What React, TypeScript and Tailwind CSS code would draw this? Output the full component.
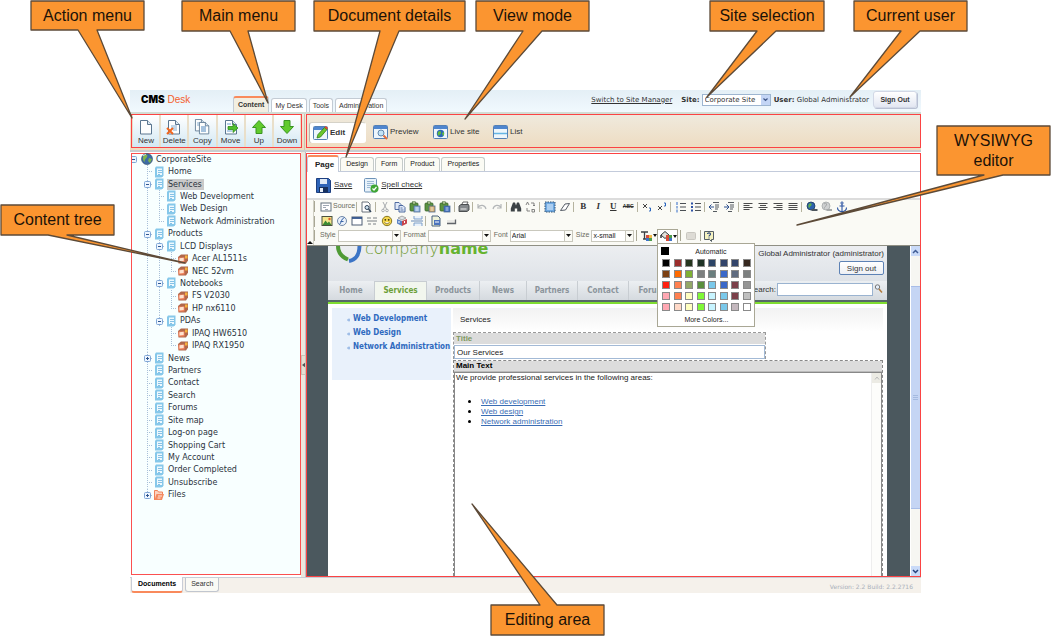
import React from "react";

const ARIAL = "font-['Liberation_Sans',Arial,sans-serif]";
const VERDANA = "font-['DejaVu_Sans',Verdana,sans-serif]";

/* ---------- Callouts ---------- */

type Callout = { text: string; box: string; shape: string };

const callouts: Callout[] = [
  { text: "Action menu", box: "left-[31px] top-[1px] w-[113px] h-[29px]", shape: "M31 1H144V30H97L132 118L78 30H31Z" },
  { text: "Main menu", box: "left-[182px] top-[1px] w-[113px] h-[30px]", shape: "M182 1H295V31H248L268 103L230 31H182Z" },
  { text: "Document details", box: "left-[314px] top-[1px] w-[151px] h-[30px]", shape: "M314 1H465V31H399L346 157L380 31H314Z" },
  { text: "View mode", box: "left-[476px] top-[1px] w-[113px] h-[30px]", shape: "M476 1H589V31H542L465 119L523 31H476Z" },
  { text: "Site selection", box: "left-[710px] top-[1px] w-[114px] h-[30px]", shape: "M710 1H824V31H776L707 97L757 31H710Z" },
  { text: "Current user", box: "left-[854px] top-[1px] w-[113px] h-[30px]", shape: "M854 1H967V31H920L850 97L901 31H854Z" },
  { text: "WYSIWYG editor", box: "left-[937px] top-[126px] w-[113px] h-[49px] px-3", shape: "M937 126H1050V175H1003L797 225L984 175H937Z" },
  { text: "Content tree", box: "left-[1px] top-[205px] w-[113px] h-[30px]", shape: "M1 205H114V235H67L185 263L48 235H1Z" },
  { text: "Editing area", box: "left-[491px] top-[605px] w-[113px] h-[30px]", shape: "M491 605H540L472 504L557 605H604V635H491Z" },
];

function Callouts() {
  return (
    <div className="pointer-events-none absolute left-0 top-0 z-30">
      <svg width="1051" height="636" className="block" aria-hidden="true">
        {callouts.map((c) => (
          <path key={c.text} d={c.shape} fill="#fb9530" stroke="#5c4a38" strokeWidth="1.3" strokeLinejoin="round" />
        ))}
      </svg>
      {callouts.map((c) => (
        <div key={c.text} className={`absolute flex items-center justify-center text-center text-base leading-5 text-[#1c1208] ${ARIAL} ${c.box}`}>
          {c.text}
        </div>
      ))}
    </div>
  );
}

/* ---------- Icons ---------- */

function DocShape({ x = 2, y = 1, s = 1 }: { x?: number; y?: number; s?: number }) {
  return (
    <g transform={`translate(${x} ${y}) scale(${s})`}>
      <path d="M0.5 0.5H7.5L11.5 4.5V14H0.5Z" fill="#fdfefe" stroke="#5a7690" />
      <path d="M7.5 0.5V4.5H11.5" fill="#dbe8f2" stroke="#5a7690" />
    </g>
  );
}

const actionIcons: Record<string, React.ReactNode> = {
  New: <DocShape />,
  Delete: (
    <>
      <DocShape />
      <path d="M5 7h6M5 9h6M7 11h4" stroke="#86add0" />
      <path d="M1 9l6 6M7 9l-6 6" stroke="#f0661e" strokeWidth="2" />
    </>
  ),
  Copy: (
    <>
      <DocShape x={1} y={0} s={0.85} />
      <path d="M3 4h4M3 6h3" stroke="#86add0" />
      <DocShape x={5} y={3} s={0.85} />
      <path d="M7 8h5M7 10h5M7 12h5" stroke="#4e86bd" />
    </>
  ),
  Move: (
    <>
      <DocShape />
      <path d="M4 5h4M4 12h5" stroke="#6da1cf" />
      <path d="M5 7.5h5V4.500L15 9l-5 4.500V10.500H5Z" fill="#4fc02b" stroke="#2f8a1c" strokeWidth="0.8" />
    </>
  ),
  Up: <path d="M8 1.500L14.500 8.500H11V14.500H5V8.500H1.500Z" fill="#61cb2d" stroke="#3a9422" />,
  Down: <path d="M8 14.500L14.500 7.500H11V1.500H5V7.500H1.500Z" fill="#61cb2d" stroke="#3a9422" />,
};

function WindowShape() {
  return (
    <>
      <rect x="0.500" y="1.500" width="14" height="13" rx="1" fill="#eef6fc" stroke="#5480b5" />
      <rect x="1" y="2" width="13" height="3" fill="#4f86cf" />
    </>
  );
}

const viewIcons: Record<string, React.ReactNode> = {
  Edit: (
    <>
      <WindowShape />
      <path d="M4 13L5 9.500L11.500 2.500L14 4.500L7.500 12Z" fill="#6cc82c" stroke="#2f7a1c" strokeWidth="0.800" />
      <path d="M11.500 2.500L12.800 1L15 3L14 4.500Z" fill="#e5492a" />
    </>
  ),
  Preview: (
    <>
      <WindowShape />
      <circle cx="8" cy="9" r="3" fill="#c4e4f7" stroke="#6487ad" />
      <path d="M10.500 11.500L14 15" stroke="#e26d3c" strokeWidth="2" />
    </>
  ),
  "Live site": (
    <>
      <WindowShape />
      <circle cx="7.500" cy="9.500" r="3.700" fill="#2b66b8" />
      <path d="M5 8c2-2 3-1 3 1s-2 1-2 3c-1-1-2-2-1-4ZM9 9l2-1v3l-1 1Z" fill="#63bc3f" />
    </>
  ),
  List: (
    <>
      <WindowShape />
      <path d="M1 9.500H14" stroke="#65b5e4" strokeWidth="1.500" />
    </>
  ),
};

function PasteShape({ mark }: { mark: string }) {
  return (
    <>
      <rect x="1" y="2" width="8" height="8" rx="1" fill="#5c9440" stroke="#38622a" strokeWidth="0.800" />
      <rect x="3.500" y="0.800" width="3" height="2.200" fill="#b9cc9c" stroke="#38622a" strokeWidth="0.600" />
      <rect x="5" y="5" width="6" height="6" fill={mark} stroke="#506f93" strokeWidth="0.800" />
      <path d="M6.500 7h3M6.500 9h3" stroke="#ffffff" strokeWidth="0.800" />
    </>
  );
}

const toolIcons: Record<string, React.ReactNode> = {
  source: (
    <>
      <rect x="1" y="2" width="10" height="8" fill="#fff" stroke="#65727f" />
      <path d="M3 4.500h6M3 6.500h3M5 8.500h3" stroke="#8792a0" strokeWidth="0.800" />
    </>
  ),
  preview: (
    <>
      <path d="M2 1h6l2 2v8H2Z" fill="#fff" stroke="#59636d" strokeWidth="0.900" />
      <circle cx="7" cy="6.500" r="2" fill="#cce0ef" stroke="#33475c" />
      <path d="M8.500 8L11 11" stroke="#33475c" strokeWidth="1.400" />
    </>
  ),
  cut: (
    <>
      <path d="M4 1l3.500 7M8 1L4.500 8" stroke="#a9adb0" fill="none" />
      <circle cx="4" cy="9.500" r="1.300" stroke="#a9adb0" fill="none" />
      <circle cx="8" cy="9.500" r="1.300" stroke="#a9adb0" fill="none" />
    </>
  ),
  copy: (
    <>
      <path d="M1 1.500h4l2 2v5H1Z" fill="#dfe8f7" stroke="#405e97" strokeWidth="0.900" />
      <path d="M5 4.500h4l2 2v4.500H5Z" fill="#dfe8f7" stroke="#405e97" strokeWidth="0.900" />
      <path d="M6.500 7h2M6.500 9h3" stroke="#405e97" strokeWidth="0.800" />
    </>
  ),
  paste: <PasteShape mark="#8fb3df" />,
  pasteText: <PasteShape mark="#d0a562" />,
  pasteWord: <PasteShape mark="#3668bd" />,
  print: (
    <>
      <path d="M3.500 4L5 1h5L8.500 4" fill="#fff" stroke="#555" strokeWidth="0.900" />
      <path d="M1 5l2-1.500h7.500L11 5v4l-2 1.500H1Z" fill="#84888b" stroke="#3f4345" strokeWidth="0.900" />
      <path d="M2.500 8h6" stroke="#eee" />
    </>
  ),
  undo: <path d="M2 3v4h4M2 6.500c2-3 7-3 8 1.500" fill="none" stroke="#b3b6b8" strokeWidth="1.200" />,
  redo: <path d="M10 3v4H6M10 6.500C8 3.500 3 3.500 2 8" fill="none" stroke="#b3b6b8" strokeWidth="1.200" />,
  find: (
    <path d="M3 1.500h2l1 3 1-3h2l2.200 6v3H7.200V7.500H4.800v3H0.800v-3Z" fill="#3c4246" />
  ),
  replace: (
    <>
      <path d="M1 4l1.500-3L4 4M7 8v3h2.500V8.500H7" fill="none" stroke="#777" strokeWidth="0.900" />
      <path d="M6 2h3v3M8 4l1 1 1-1M5 10H2V7" fill="none" stroke="#777" strokeWidth="0.900" />
    </>
  ),
  selectAll: (
    <>
      <rect x="1" y="1" width="10" height="10" fill="#6fa9e2" stroke="#33506f" strokeDasharray="1.500 1" />
      <path d="M3 4h6M3 6h6M3 8h6" stroke="#e9f4ff" />
    </>
  ),
  eraser: <path d="M1.500 9.500L6 3l4.500-0.500L6.500 9Z" fill="#fff" stroke="#565d66" />,
  sub: (
    <>
      <path d="M2 3l4 4M6 3L2 7" stroke="#444" />
      <path d="M8 7h1.500v3H8" stroke="#2c67be" fill="none" />
    </>
  ),
  sup: (
    <>
      <path d="M2 5l4 4M6 5L2 9" stroke="#444" />
      <path d="M8 2h1.500v3H8" stroke="#2c67be" fill="none" />
    </>
  ),
  ol: (
    <>
      <path d="M5 2.500h6M5 6h6M5 9.500h6" stroke="#4a4f54" />
      <path d="M2 1v3M2 5v2.500M2 8.500v3" stroke="#2f69c6" />
    </>
  ),
  ul: (
    <>
      <path d="M5 2.500h6M5 6h6M5 9.500h6" stroke="#4a4f54" />
      <path d="M1 2.500h2M1 6h2M1 9.500h2" stroke="#2f52a6" strokeWidth="1.800" />
    </>
  ),
  outdent: (
    <>
      <path d="M5 1.500h6M7 4h4M7 6h4M7 8h3M5 10.500h4" stroke="#555b60" />
      <path d="M1 6h5M3.500 3.500L1 6l2.500 2.500" stroke="#2b4f8f" fill="none" />
    </>
  ),
  indent: (
    <>
      <path d="M5 1.500h6M7 4h4M7 6h4M7 8h3M5 10.500h4" stroke="#555b60" />
      <path d="M1 6h5M3.500 3.500L6 6 3.500 8.500" stroke="#2b4f8f" fill="none" />
    </>
  ),
  left: <path d="M1.500 2.500h9M1.500 4.500h6M1.500 6.500h9M1.500 8.500h6" stroke="#4b4b4b" />,
  center: <path d="M1.500 2.500h9M3 4.500h6M1.500 6.500h9M3 8.500h6" stroke="#4b4b4b" />,
  right: <path d="M1.500 2.500h9M4.500 4.500h6M1.500 6.500h9M4.500 8.500h6" stroke="#4b4b4b" />,
  justify: <path d="M1.500 2.500h9M1.500 4.500h9M1.500 6.500h9M1.500 8.500h9" stroke="#4b4b4b" />,
  link: (
    <>
      <circle cx="5" cy="5" r="4" fill="#2c62ad" stroke="#1d3a5c" strokeWidth="0.800" />
      <path d="M3 3c2-1.500 3-0.500 2.500 1S3 5.500 3.500 7.500C2 6 2 4.500 3 3Z" fill="#60b04a" />
      <path d="M5.500 9h2.500M8 9h3.500" stroke="#4d555d" strokeWidth="2" />
    </>
  ),
  unlink: (
    <>
      <circle cx="5" cy="5" r="4" fill="#cfd1d1" stroke="#a5a8a8" strokeWidth="0.800" />
      <path d="M3 3c2-1.500 3-0.500 2.500 1S3 5.500 3.500 7.500" stroke="#a5a8a8" fill="none" />
      <path d="M5.500 9h5.500" stroke="#a5a8a8" strokeWidth="2" />
    </>
  ),
  anchor: (
    <>
      <circle cx="6" cy="2" r="1.100" fill="none" stroke="#2a53a3" />
      <path d="M6 3v8M3.500 5h5M1.500 6.500c0 3 2 4 4.500 4.300 2.500-.3 4.500-1.300 4.500-4.300" fill="none" stroke="#2a53a3" strokeWidth="1.100" />
    </>
  ),
  image: (
    <>
      <rect x="1" y="1.500" width="10" height="9" fill="#f4e58c" stroke="#49503e" />
      <path d="M1.500 10L4.500 5.500l2 2.500L8 6.500 10.500 10Z" fill="#3c8a33" />
      <circle cx="8.500" cy="4" r="1.200" fill="#e05d2b" />
    </>
  ),
  flash: (
    <>
      <circle cx="6" cy="6" r="4.500" fill="#eaf1fa" stroke="#7289a8" />
      <path d="M3.500 9.500C5.500 8 5 3.500 8.500 2.500M4.500 6.500h3" stroke="#3964a6" fill="none" />
    </>
  ),
  table: (
    <>
      <rect x="1" y="2" width="10" height="8" fill="#fff" stroke="#4d5d75" />
      <path d="M1 3h10" stroke="#31538b" strokeWidth="1.800" />
    </>
  ),
  rule: <path d="M1 3h4M7 3h4M1 6h10M2 9h3M7 9h3" stroke="#7b8086" strokeWidth="1.200" />,
  smiley: (
    <>
      <circle cx="6" cy="6" r="4.700" fill="#f5d74c" stroke="#877722" />
      <circle cx="4.300" cy="4.800" r="0.900" fill="#3b3310" />
      <circle cx="7.700" cy="4.800" r="0.900" fill="#3b3310" />
      <path d="M3.500 7.200c1 2 4 2 5 0" fill="#fff" stroke="#6e5b10" strokeWidth="0.800" />
    </>
  ),
  chars: (
    <>
      <path d="M6 1l4 2-4 2-4-2Z" fill="#dfe3e8" stroke="#777" strokeWidth="0.600" />
      <path d="M1 4l5 2v5L1 8.500Z" fill="#5b83c5" />
      <path d="M11 4L6 6v5l5-2.500Z" fill="#c8464e" />
      <path d="M3 6v2M8.500 6v2" stroke="#fff" />
    </>
  ),
  pageBreak: (
    <>
      <path d="M3 1v3h8V1M3 11V8h8v3" fill="#eaf2fb" stroke="#7d9fca" />
      <path d="M0 6h12" stroke="#6689b9" />
    </>
  ),
  template: (
    <>
      <path d="M2 1h6l2 2v8H2Z" fill="#eff3d8" stroke="#48607c" />
      <rect x="4" y="5" width="6" height="5" fill="#4b73bd" />
      <path d="M5 7h4" stroke="#fff" />
    </>
  ),
  button: (
    <>
      <path d="M2 5h8v3H2Z" fill="#e9e9e6" />
      <path d="M2 8.500h8.500V4.500" fill="none" stroke="#60646a" strokeWidth="1.300" />
    </>
  ),
  textColor: (
    <>
      <path d="M1 2h7M4.500 2v7M3 9h3" stroke="#3d4145" strokeWidth="1.300" />
      <rect x="6" y="5" width="3" height="3" fill="#d84c39" />
      <rect x="9" y="5" width="3" height="3" fill="#f2b94b" />
      <rect x="6" y="8" width="3" height="3" fill="#3f73c8" />
      <rect x="9" y="8" width="3" height="3" fill="#4e9d49" />
    </>
  ),
  fillColor: (
    <>
      <path d="M1 5l4-3.500L9 5 5 8.500Z" fill="#e1e1dc" stroke="#34383b" />
      <path d="M1 5v3" stroke="#34383b" strokeWidth="1.500" />
      <rect x="6" y="5" width="3" height="3" fill="#d84c39" />
      <rect x="9" y="5" width="3" height="3" fill="#4e9d49" />
      <rect x="6" y="8" width="3" height="3" fill="#d84c39" />
      <rect x="9" y="8" width="3" height="3" fill="#3f73c8" />
    </>
  ),
  disabled: <rect x="1.500" y="2.500" width="9" height="7" rx="1" fill="#dddbd5" stroke="#c9c7c1" />,
  help: (
    <>
      <path d="M1.500 1.500h9v8h-2v2l-2-2h-5Z" fill="#f5f2c1" stroke="#555f66" />
      <path d="M4.500 4c0-1.500 3-1.500 3 0S6 5 6 6.500M6 7.500v1" fill="none" stroke="#2c467e" strokeWidth="1.100" />
    </>
  ),
};

function Tool({ name, label }: { name: string; label?: string }) {
  return (
    <button type="button" aria-label={label ?? name} className="flex h-[13px] w-[15px] shrink-0 items-center justify-center">
      <svg width="12" height="12" viewBox="0 0 12 12" fill="none" aria-hidden="true">
        {toolIcons[name]}
      </svg>
    </button>
  );
}

function LetterTool({ label, className }: { label: string; className: string }) {
  return (
    <button type="button" className={`flex h-[13px] w-[15px] shrink-0 items-center justify-center text-[#333] ${className}`}>
      {label}
    </button>
  );
}

function Sep() {
  return <span className="ml-px h-[10px] flex-1 border-l border-[#b5b39f]" />;
}

/* ---------- Header ---------- */

function Header() {
  const tab = "h-[14px] rounded-t-[3px] border border-b-0 border-[#c3cbd4] bg-white px-[3px] pt-px text-[7px] leading-3 text-[#333]";
  return (
    <header className="flex h-[22px] items-end bg-linear-to-b from-[#e4eff6] to-[#f1f9fe]">
      <h1 className={`w-[103px] self-center pb-[3px] pl-[11px] text-[10px] leading-4 ${ARIAL}`}>
        <span className="font-['Inter',sans-serif] font-black text-black">CMS</span> <span className="text-[#f4602c]">Desk</span>
      </h1>
      <nav className={`flex items-end gap-[2px] ${ARIAL}`}>
        <a href="#content" className="h-[16px] rounded-t-[3px] border border-b-0 border-t-2 border-[#c3cbd4] border-t-[#f98a5c] bg-[#f2eee1] px-[4px] pt-px text-[7px] font-bold leading-3 text-[#333]">Content</a>
        <a href="#mydesk" className={tab}>My Desk</a>
        <a href="#tools" className={tab}>Tools</a>
        <a href="#admin" className={tab}>Administration</a>
      </nav>
      <div className={`ml-auto flex items-center pb-[4px] pr-[4px] text-[7px] leading-3 text-[#333] ${VERDANA}`}>
        <a href="#manager" className="underline">Switch to Site Manager</a>
        <label htmlFor="site" className="ml-[9px] mr-[2px] font-bold">Site:</label>
        <span className="relative block h-[12px] w-[69px]">
          <select id="site" className="block h-full w-full appearance-none border border-[#9db5d0] bg-white pl-[2px] leading-[10px]">
            <option>Corporate Site</option>
          </select>
          <span className="pointer-events-none absolute right-px top-px flex h-[10px] w-[9px] items-center justify-center bg-[#c3d5f5]">
            <svg width="5" height="4" viewBox="0 0 5 4" fill="none" aria-hidden="true"><path d="M.5.5L2.500 2.500 4.500.5" stroke="#3f5788" strokeWidth="1.200" /></svg>
          </span>
        </span>
        <span className="ml-[3px]"><b>User:</b> <span className="text-[7px]">Global Administrator</span></span>
        <button type="button" className={`ml-[4px] h-[17px] w-[44px] rounded-[3px] border border-[#d2d8e6] bg-linear-to-b from-white to-[#e3e7f2] text-[7px] font-bold shadow-[1px_1px_0_#b9c0d3] ${ARIAL}`}>Sign Out</button>
      </div>
    </header>
  );
}

/* ---------- Action and view bars ---------- */

function Bars() {
  return (
    <div className="flex h-[40px] border-b-2 border-t-2 border-b-[#c9cdd0] border-t-[#d3dcd4] bg-linear-to-b from-[#efeade] to-[#eedbbf]">
      <div className="ml-px flex h-[34px] w-[171px] shrink-0 justify-between border border-[#fb4343] bg-[#f4efe2]">
        {Object.keys(actionIcons).map((k) => (
          <button key={k} type="button" className={`flex flex-1 flex-col items-center justify-end border-x border-[#e9dfca] bg-linear-to-b from-white to-[#d3e8f3] pb-px text-[8px] leading-[11px] text-[#333] ${ARIAL}`}>
            <svg width="16" height="16" viewBox="0 0 16 16" fill="none" aria-hidden="true">{actionIcons[k]}</svg>
            {k}
          </button>
        ))}
      </div>
      <div className="ml-[2px] w-[2px] border-l border-[#cfc4b2]" />
      <nav className={`flex h-[34px] flex-1 items-center border border-[#fb4343] pl-[2px] pt-[2px] text-[8px] text-[#333] ${ARIAL}`}>
        {Object.keys(viewIcons).map((k) => (
          <button
            key={k}
            type="button"
            className={
              k === "Edit"
                ? "flex h-[21px] w-[57px] items-center gap-[2px] rounded-[3px] border border-b-0 border-l-[#b9b6ae] border-t-[#d5d2c8] border-r-white bg-white pl-[3px] font-bold"
                : "ml-[7px] flex h-[21px] w-[53px] items-center gap-[2px]"
            }
          >
            <svg width="15" height="16" viewBox="0 0 15 16" fill="none" className="shrink-0" aria-hidden="true">{viewIcons[k]}</svg>
            <span className="whitespace-nowrap">{k}</span>
          </button>
        ))}
      </nav>
    </div>
  );
}

/* ---------- Content tree ---------- */

/* Guide cells: "." blank, "|" line, "t" branch, "l" last branch, "-" open, "+" closed, "e" closed and last */
type Row = [guides: string, icon: "globe" | "page" | "item" | "folder", label: string];

const rows: Row[] = [
  ["", "globe", "CorporateSite"],
  ["t", "page", "Home"],
  ["-", "page", "Services"],
  ["|t", "page", "Web Development"],
  ["|t", "page", "Web Design"],
  ["|l", "page", "Network Administration"],
  ["-", "page", "Products"],
  ["|-", "page", "LCD Displays"],
  ["||t", "item", "Acer AL1511s"],
  ["||l", "item", "NEC 52vm"],
  ["|-", "page", "Notebooks"],
  ["||t", "item", "FS V2030"],
  ["||l", "item", "HP nx6110"],
  ["|-", "page", "PDAs"],
  ["|.t", "item", "IPAQ HW6510"],
  ["|.l", "item", "IPAQ RX1950"],
  ["+", "page", "News"],
  ["t", "page", "Partners"],
  ["t", "page", "Contact"],
  ["t", "page", "Search"],
  ["t", "page", "Forums"],
  ["t", "page", "Site map"],
  ["t", "page", "Log-on page"],
  ["t", "page", "Shopping Cart"],
  ["t", "page", "My Account"],
  ["t", "page", "Order Completed"],
  ["t", "page", "Unsubscribe"],
  ["e", "folder", "Files"],
];

function Guide({ kind }: { kind: string }) {
  const toggle = kind === "-" || kind === "+" || kind === "e";
  return (
    <svg className="h-full w-[12px] shrink-0" aria-hidden="true">
      <g stroke="#a9bfd8" strokeDasharray="1 1">
        {kind !== "." && <line x1="6.5" y1="0" x2="6.5" y2={kind === "l" || kind === "e" ? "50%" : "100%"} />}
        {kind !== "." && kind !== "|" && <line x1="6" y1="6.5" x2="12" y2="6.5" />}
      </g>
      {toggle && (
        <>
          <rect x="3.5" y="3.5" width="6" height="6" rx="1" fill="#eef6ff" stroke="#7fa6d6" />
          <path d={kind === "-" ? "M5 6.500H8" : "M5 6.500H8M6.500 5V8"} stroke="#2f568f" />
        </>
      )}
    </svg>
  );
}

function NodeIcon({ icon }: { icon: Row[1] }) {
  return (
    <svg width="12" height="12" viewBox="0 0 12 12" fill="none" className="shrink-0" aria-hidden="true">
      {icon === "globe" && (
        <>
          <circle cx="6" cy="6" r="5.500" fill="#3d6ba5" stroke="#314a63" strokeWidth="0.600" />
          <path d="M3 2c3-1 4 0 3 2S3 6 4 9C2 8 1 5 3 2ZM8 5l3 1-2 4-2-2Z" fill="#7fb54b" />
          <path d="M2 3c1-1 2-1.500 3-1.500" stroke="#dcebfa" />
        </>
      )}
      {icon === "page" && (
        <>
          <path d="M2 2h8v9H2Z" fill="#9fd4ef" />
          <path d="M3 0.500h7.500V9.500l-2 2H2V2" fill="#86c8ea" />
          <path d="M4 2.500h5v6.500H4Z" fill="#eef9fe" />
          <path d="M5 4.500h4M5 6.500h4M5 8.500h2" stroke="#6cb3de" strokeWidth="0.800" />
        </>
      )}
      {icon === "item" && (
        <>
          <path d="M1 4l3-2.500h7v6L9 10.500H1.500Z" fill="#b0684c" />
          <path d="M1.500 4.500h6v5h-6Z" fill="#f4825c" />
          <path d="M2.500 5.300l4.200-.6v3.300l-4.200 .6Z" fill="#fde3cf" />
          <path d="M8 2.500h2.500v3H8Z" fill="#f6b23c" />
        </>
      )}
      {icon === "folder" && (
        <>
          <path d="M1.500 11V1.500h3l1 1.500h4v2" fill="#fbd3c1" stroke="#f08259" />
          <path d="M1.500 11l2-6h7.500l-2 6Z" fill="#f48a60" />
          <path d="M5 7h4M4.500 9h3" stroke="#fff" strokeWidth="0.800" />
        </>
      )}
    </svg>
  );
}

function Tree() {
  return (
    <aside className="mb-[2px] ml-px mt-px flex w-[170px] shrink-0 flex-col self-stretch border border-[#fb5050] bg-[#f8ffff]">
      <ul className={`-mt-px grid h-[348px] auto-rows-fr text-[8px] leading-[12px] text-[#2b3340] ${VERDANA}`}>
        {rows.map(([guides, icon, label]) => (
          <li key={label} className="flex min-h-0 items-center">
            <span className="flex h-full w-[9px] shrink-0 items-center">
              {icon === "globe" && (
                <svg width="6" height="7" fill="none" aria-hidden="true"><rect x="-1.500" y="0.500" width="6" height="6" rx="1" fill="#eef6ff" stroke="#7fa6d6" /><path d="M0 3.500H3" stroke="#2f568f" /></svg>
              )}
            </span>
            {guides.split("").map((g, i) => <Guide key={i} kind={g} />)}
            <NodeIcon icon={icon} />
            <a href="#node" className={label === "Services" ? "ml-[2px] bg-[#c9c9c9] pl-px pr-[2px] leading-[11px]" : "ml-[3px] leading-[11px]"}>{label}</a>
          </li>
        ))}
      </ul>
    </aside>
  );
}

/* ---------- Editor toolbar ---------- */

const swatches = [
  "bg-[#000000]", "bg-[#9b2d2b]", "bg-[#26361f]", "bg-[#1f3326]", "bg-[#2c4466]", "bg-[#33456b]", "bg-[#33456b]", "bg-[#36281f]",
  "bg-[#7b3f12]", "bg-[#ff6a00]", "bg-[#7fb135]", "bg-[#7d8080]", "bg-[#6b7f7f]", "bg-[#3a68c9]", "bg-[#5f6b7f]", "bg-[#7d8080]",
  "bg-[#ff2010]", "bg-[#ff8050]", "bg-[#93a868]", "bg-[#5a8f3d]", "bg-[#7ac8ea]", "bg-[#3a68c9]", "bg-[#7b404a]", "bg-[#969696]",
  "bg-[#ffa8b3]", "bg-[#ff8050]", "bg-[#ffffc0]", "bg-[#80f838]", "bg-[#c8f4ff]", "bg-[#7ac8ea]", "bg-[#7b404a]", "bg-[#c0c0c0]",
  "bg-[#ffa8b3]", "bg-[#ffd9c8]", "bg-[#ffffc0]", "bg-[#80f838]", "bg-[#c8f4ff]", "bg-[#7ac8ea]", "bg-[#c4b8be]", "bg-[#ffffff]",
];

function Palette() {
  return (
    <div className="absolute -left-px top-[13px] z-20 flex h-[84px] w-[98px] flex-col border border-[#a9a795] bg-white px-[2px] pb-[2px] pt-[3px] text-[7px] leading-[9px] text-[#222]">
      <button type="button" className="flex items-center pl-px">
        <span className="h-[8px] w-[8px] bg-black" />
        <span className="flex-1 text-center">Automatic</span>
      </button>
      <div className="grid flex-1 grid-cols-8 content-evenly justify-items-center">
        {swatches.map((s, i) => (
          <button key={i} type="button" aria-label={`Color ${i + 1}`} className={`h-[8px] w-[8px] border border-[#8a8a8a] ${s}`} />
        ))}
      </div>
      <button type="button" className="text-center">More Colors...</button>
    </div>
  );
}

function Combo({ id, label, value, width }: { id: string; label: string; value: string; width: string }) {
  return (
    <span className="flex items-center">
      <label htmlFor={id} className="mr-[2px] text-[#6b6b60]">{label}</label>
      <span className={`relative block h-[12px] ${width}`}>
        <select id={id} className="block h-full w-full appearance-none border border-[#c9c8bd] bg-white pl-px text-[7px] leading-[10px] text-[#222]">
          <option>{value}</option>
        </select>
        <span className="pointer-events-none absolute right-0 top-0 flex h-full w-[9px] items-center justify-center border border-[#c9c8bd] bg-[#fbfbf6]">
          <svg width="5" height="3" aria-hidden="true"><path d="M0 0H5L2.500 3Z" fill="#111" /></svg>
        </span>
      </span>
    </span>
  );
}

const row1: (string | null)[] = [
  "preview", null, "cut", "copy", "paste", "pasteText", "pasteWord", null, "print", null, "undo", "redo", null, "find", "replace", null, "selectAll", "eraser", null,
  "B", "I", "U", "ABC", null, "sub", "sup", null, "ol", "ul", null, "outdent", "indent", null, "left", "center", "right", "justify", null, "link", "unlink", "anchor",
];

const letterStyles: Record<string, string> = {
  B: "text-[9px] font-bold font-['Liberation_Serif',serif]",
  I: "text-[9px] font-bold italic font-['Liberation_Serif',serif]",
  U: "text-[9px] font-bold underline font-['Liberation_Serif',serif]",
  ABC: "text-[5px] font-bold line-through",
};

function EditorToolbar() {
  const grip = "h-[11px] w-[6px] shrink-0 border-l border-[#a9a795]";
  return (
    <div className={`flex h-[48px] shrink-0 border-b border-t-2 border-b-[#8f8f84] border-t-[#dcdcdc] bg-[#fafaf5] text-[7px] ${ARIAL}`}>
      <div className="flex w-[7px] shrink-0 items-end border-r border-[#d0cfc4]">
        <svg width="6" height="5" aria-hidden="true"><path d="M0 4L3 1 6 4Z" fill="#111" /></svg>
      </div>
      <div className="flex flex-col justify-between pb-[3px]">
        <div className="flex h-[13px] w-[535px] items-center">
          <span className={grip} />
          <button type="button" className="flex items-center gap-px text-[#6b6b60]">
            <svg width="12" height="12" viewBox="0 0 12 12" fill="none" aria-hidden="true">{toolIcons.source}</svg>
            Source
          </button>
          <Sep />
          {row1.map((t, i) =>
            t === null ? <Sep key={i} /> : letterStyles[t] ? <LetterTool key={i} label={t} className={letterStyles[t]} /> : <Tool key={i} name={t} />
          )}
        </div>
        <div className="flex h-[13px] w-[144px] items-center">
          <span className="h-[11px] w-[5px] shrink-0 border-l border-[#a9a795]" />
          {["image", "flash", "table", "rule", "smiley", "chars", "pageBreak"].map((t) => <Tool key={t} name={t} />)}
          <Sep />
          <Tool name="template" />
          <Tool name="button" />
        </div>
        <div className="flex h-[13px] items-center">
          <span className={grip} />
          <div className="flex gap-[3px]">
            <Combo id="style" label="Style" value="" width="w-[63px]" />
            <Combo id="format" label="Format" value="" width="w-[63px]" />
            <Combo id="font" label="Font" value="Arial" width="w-[63px]" />
            <Combo id="size" label="Size" value="x-small" width="w-[43px]" />
          </div>
          <span className="ml-[2px] h-[11px] w-[2px] border-l border-[#a9a795]" />
          <Tool name="textColor" label="Text color" />
          <svg width="4" height="3" aria-hidden="true"><path d="M0 0H4L2 3Z" fill="#111" /></svg>
          <div className="relative z-20 flex h-[14px] w-[21px] items-center border border-b-0 border-[#a9a795] bg-white">
            <Tool name="fillColor" label="Background color" />
            <svg width="4" height="3" aria-hidden="true"><path d="M0 0H4L2 3Z" fill="#111" /></svg>
            <Palette />
          </div>
          <span className="ml-[2px] h-[11px] w-[3px] border-l border-[#a9a795]" />
          <Tool name="disabled" label="Unavailable" />
          <span className="ml-[2px] h-[11px] w-px border-l border-[#a9a795]" />
          <Tool name="help" label="Help" />
        </div>
      </div>
    </div>
  );
}

/* ---------- Edited page ---------- */

function SitePage() {
  const nav = "flex items-center justify-center border-r border-[#c8cdd2]";
  return (
    <div className={`flex min-w-0 flex-1 flex-col overflow-hidden bg-white ${ARIAL}`}>
      <div className="flex h-[35px] shrink-0 justify-between bg-linear-to-b from-[#eceef1] to-[#dfe3e8]">
        <div className={`flex h-[18px] items-end pl-[8px] ${VERDANA}`}>
          <svg width="26" height="18" viewBox="0 0 26 18" fill="none" className="shrink-0" aria-hidden="true">
            <path d="M2 0c0 6 4 11 10 13.500" stroke="#4f9a35" strokeWidth="4" />
            <path d="M13 15c6-1 10.500-6 10.500-15" stroke="#3b74c6" strokeWidth="4" />
          </svg>
          <p className="ml-[3px] h-[20px] shrink-0 whitespace-nowrap text-[16px] leading-[10px]">
            <span className="font-extralight text-[#6c9a2c]">company</span><b className="text-[#65b32e]">name</b>
          </p>
        </div>
        <div className="flex flex-col items-end pr-[3px] text-[8px] leading-[15px] text-[#333]">
          <span className="whitespace-nowrap">Global Administrator (administrator)</span>
          <button type="button" className="h-[14px] w-[45px] shrink-0 rounded-[2px] border border-[#5d82b5] bg-linear-to-b from-white to-[#eef0f4] leading-[11px]">Sign out</button>
        </div>
      </div>
      <div className="flex h-[19px] shrink-0 bg-linear-to-b from-[#eceff2] to-[#d5dadf]">
        <nav className="flex text-[8px] font-bold text-[#8b949b] font-['DejaVu_Sans_Condensed','DejaVu_Sans',sans-serif]">
          <a href="#home" className={`${nav} w-[47px]`}>Home</a>
          <a href="#services" className={`${nav} w-[52px] border-t bg-[#f2f6ee] text-[#6da03a]`}>Services</a>
          <a href="#products" className={`${nav} w-[53px]`}>Products</a>
          <a href="#news" className={`${nav} w-[47px]`}>News</a>
          <a href="#partners" className={`${nav} w-[51px]`}>Partners</a>
          <a href="#contact" className={`${nav} w-[51px]`}>Contact</a>
          <a href="#forums" className={`${nav} w-[50px]`}>Forums</a>
        </nav>
        <div className="ml-auto flex items-start gap-px pr-[4px] pt-[2px] text-[8px] text-[#333]">
          <label htmlFor="q" className="leading-[14px]">Search:</label>
          <input id="q" type="text" className="h-[13px] w-[96px] border border-[#9ab3d0] bg-white px-px" />
          <svg width="9" height="11" viewBox="0 0 9 11" fill="none" aria-hidden="true"><circle cx="3.500" cy="4" r="2.200" fill="#e4eefb" stroke="#777" /><path d="M5 6l3 3.500" stroke="#b07a3c" strokeWidth="1.500" /></svg>
        </div>
      </div>
      <div className="h-[4px] shrink-0 border-t-2 border-[#566967] bg-[#80dd30]" />
      <div className="flex min-h-0 flex-1 gap-[2px] px-[4px] pt-[4px]">
        <nav className="h-[72px] w-[119px] shrink-0 bg-[#e9f1fb] pl-[15px] pt-[4px] text-[8px] font-bold leading-[14px] text-[#2f6abf] font-['DejaVu_Sans_Condensed','DejaVu_Sans',sans-serif]">
          {["Web Development", "Web Design", "Network Administration"].map((t) => (
            <a key={t} href="#sub" className="flex items-center gap-[2px] whitespace-nowrap">
              <svg width="4" height="4" className="mt-[2px] shrink-0" aria-hidden="true"><path d="M0 2H3M2 .5V3.500" stroke="#86ace0" /></svg>
              {t}
            </a>
          ))}
        </nav>
        <div className="flex min-h-0 flex-1 flex-col text-[8px] text-[#222]">
          <div className="h-[24px] shrink-0 bg-linear-to-b from-[#f2f2f2] to-white pl-[7px] leading-[24px]">Services</div>
          <div className="h-[27px] w-[313px] shrink-0 border border-b-0 border-dashed border-[#999]">
            <label htmlFor="title" className="block h-[11px] bg-[#dcdcdc] pl-[2px] text-[8px] font-bold leading-[11px] text-[#7f9860]">Title</label>
            <input id="title" type="text" defaultValue="Our Services" className="mt-px block h-[14px] w-full border border-[#a3bad6] px-[2px] text-[8px]" />
          </div>
          <div className="mt-px flex min-h-0 flex-1 flex-col border border-b-0 border-dashed border-[#888]">
            <div className="h-[11px] shrink-0 border-b border-[#bbb] bg-[#dcdcdc] pl-[2px] text-[8px] font-bold leading-[10px] text-black">Main Text</div>
            <div className="flex min-h-0 flex-1 border-l border-r border-t border-[#888] bg-white">
              <div className="flex-1 pl-px leading-[10px]">
                <p>We provide professional services in the following areas:</p>
                <ul className="mt-[12px] list-disc pl-[25px] text-[#3a6db5] marker:text-[11px] marker:text-black">
                  <li className="h-[10px]"><a href="#dev" className="underline">Web development</a></li>
                  <li className="h-[10px]"><a href="#design" className="underline">Web design</a></li>
                  <li className="h-[10px]"><a href="#net" className="underline">Network administration</a></li>
                </ul>
              </div>
              <div className="w-[10px] border-l border-[#eee] bg-[#fdfdfb]">
                <div className="flex h-[10px] items-center justify-center bg-[#ecebe4]">
                  <svg width="6" height="4" fill="none" aria-hidden="true"><path d="M1 3.500L3 1l2 2.500" stroke="#bbb" /></svg>
                </div>
              </div>
            </div>
          </div>
        </div>
      </div>
    </div>
  );
}

function Scrollbar() {
  return (
    <div className="flex w-[9px] shrink-0 flex-col bg-[#f6f6f2]">
      <div className="flex h-[10px] items-center justify-center bg-[#c9daf8]">
        <svg width="7" height="5" fill="none" aria-hidden="true"><path d="M1 4L3.500 1.500 6 4" stroke="#3f5c94" strokeWidth="1.500" /></svg>
      </div>
      <div className="h-[30px]" />
      <div className="flex flex-1 items-center justify-center border-y border-[#a8bde8] bg-[#c5d5f4]">
        <svg width="5" height="6" aria-hidden="true"><path d="M0 .5H5M0 2.500H5M0 4.500H5" stroke="#a5bae0" /></svg>
      </div>
      <div className="h-[57px]" />
      <div className="flex h-[10px] items-center justify-center bg-[#c9daf8]">
        <svg width="7" height="5" fill="none" aria-hidden="true"><path d="M1 1L3.500 3.500 6 1" stroke="#24427e" strokeWidth="1.500" /></svg>
      </div>
    </div>
  );
}

function Editor() {
  const tab = "flex h-[14px] items-center rounded-t-[3px] border border-b-0 border-[#c5cbc9] bg-[#fbfbf4] px-[5px] font-normal";
  return (
    <section className="mt-px flex min-w-0 flex-1 flex-col border border-[#fb4343] bg-white">
      <nav className={`flex h-[18px] shrink-0 items-end gap-px border-b border-[#c3cbdb] text-[7px] text-[#222] ${ARIAL}`}>
        <a href="#page" className="-mb-px flex h-[17px] items-center rounded-t-[3px] border border-b-0 border-t-2 border-[#c3cbdb] border-t-[#f98a5c] bg-white pl-[7px] pr-[4px] text-[8px] font-bold">Page</a>
        <a href="#design" className={tab}>Design</a>
        <a href="#form" className={tab}>Form</a>
        <a href="#product" className={tab}>Product</a>
        <a href="#properties" className={tab}>Properties</a>
      </nav>
      <div className={`flex h-[26px] shrink-0 items-center gap-[12px] pl-[9px] text-[8px] text-[#333] ${ARIAL}`}>
        <button type="button" className="flex items-center gap-[3px] underline">
          <svg width="15" height="15" viewBox="0 0 15 15" fill="none" aria-hidden="true">
            <path d="M.5.5h12l2 2v12H.5Z" fill="#2f64b8" stroke="#1e3f80" />
            <path d="M4 1h7v5H4Z" fill="#dfe9f6" />
            <path d="M3 9h9v5.500H3Z" fill="#16305e" />
            <path d="M4 10h3v4H4Z" fill="#e8eef6" />
          </svg>
          Save
        </button>
        <button type="button" className="flex items-center gap-[2px] underline">
          <svg width="15" height="15" viewBox="0 0 15 15" fill="none" aria-hidden="true">
            <rect x=".5" y=".5" width="12" height="13.500" rx="1" fill="#e8f2fa" stroke="#6d92b8" />
            <path d="M3 3.500h7M3 5.500h7M3 7.500h5M3 9.500h3" stroke="#9dbad6" />
            <circle cx="10.500" cy="10.500" r="4" fill="#3fa535" />
            <path d="M8.500 10.500l1.500 1.500 2.500-3" stroke="#fff" strokeWidth="1.200" />
          </svg>
          Spell check
        </button>
      </div>
      <EditorToolbar />
      <div className="flex min-h-0 flex-1">
        <div className="w-[21px] shrink-0 bg-[#4b585e]" />
        <SitePage />
        <div className="mr-px w-[23px] shrink-0 bg-[#4b585e]" />
        <Scrollbar />
      </div>
    </section>
  );
}

export default function App() {
  return (
    <div className="relative flex min-h-screen flex-col overflow-hidden bg-white px-[130px] pb-[43px] pt-[90px]">
      <Header />
      <Bars />
      <main className="flex min-h-[425px] flex-1">
        <Tree />
        <div className="flex w-[5px] shrink-0 items-center border-r border-[#b9bfc4] bg-[#ece6dc]">
          <button type="button" aria-label="Collapse tree" className="flex h-[20px] w-[5px] items-center border border-[#c9c3b6] bg-[#e6dfd2]">
            <svg width="4" height="6" aria-hidden="true"><path d="M4 0V6L0 3Z" fill="#555" /></svg>
          </button>
        </div>
        <Editor />
      </main>
      <footer className={`flex h-[16px] shrink-0 items-start justify-between border-t border-[#c9cdd6] bg-[#f5f1eb] text-[7px] text-[#333] ${ARIAL}`}>
        <nav className="-mt-px flex items-start gap-[2px] pl-px">
          <a href="#documents" className="flex h-[16px] items-center rounded-b-[3px] border border-b-2 border-t-0 border-[#c9cdd6] border-b-[#f98a5c] bg-white px-[6px] font-bold text-black">Documents</a>
          <a href="#search" className="mt-px flex h-[14px] items-center rounded-b-[3px] border border-t-0 border-[#c1c6cf] bg-[#fafaf5] px-[5px]">Search</a>
        </nav>
        <span className={`pr-[8px] text-[6px] leading-[17px] text-[#a9b0ba] ${VERDANA}`}>Version: 2.2 Build: 2.2.2716</span>
      </footer>
      <Callouts />
    </div>
  );
}
